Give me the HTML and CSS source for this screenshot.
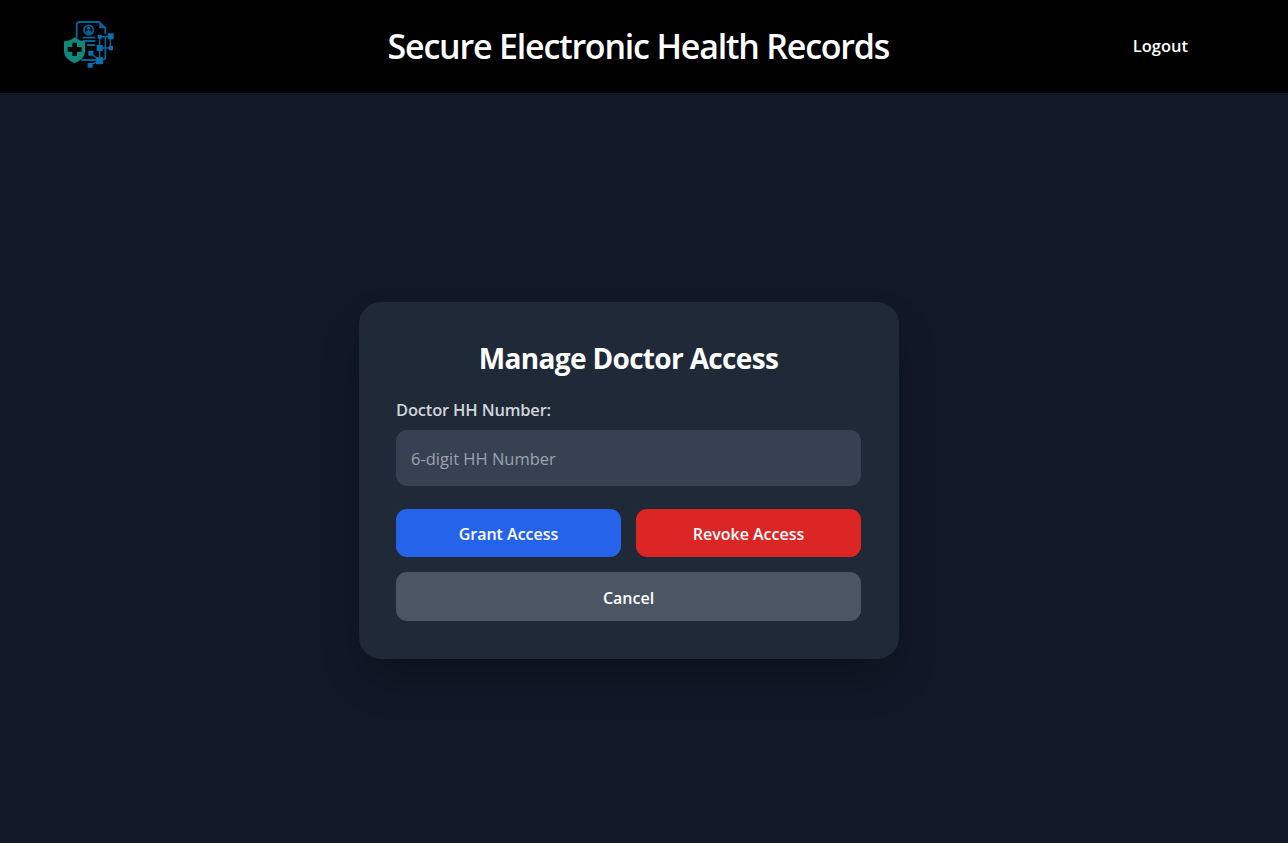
FILE: index.html
```html
<!DOCTYPE html>
<html lang="en">
<head>
<meta charset="utf-8">
<title>Secure Electronic Health Records</title>
<link rel="stylesheet" href="styles.css">
</head>
<body>
<header class="header">
  <svg class="logo" viewBox="0 0 198 192" fill="none">
    <g stroke="#06629b" stroke-width="5.5" stroke-linecap="round" stroke-linejoin="round">
      <path d="M62 78V38q0-8 8-8h60l18 18v16M148 112v24q0 7-7 7M78 144h40"/>
      <circle cx="98" cy="54" r="14"/>
      <path d="M82 77h34M82 87h34M95 99h20"/>
      <path stroke-width="4.5" d="M132 74h30M131 74v32M131 108h32v-34M104 123l27 23M103 159l26-13M131 108v38M148 76v30"/>
    </g>
    <path d="M130 30l19 19h-19z" fill="#06629b"/>
    <circle cx="98" cy="49" r="5.5" fill="#06629b"/>
    <path d="M88 62q2-7 10-7t10 7q-10 6-20 0z" fill="#06629b"/>
    <g fill="#0870ae">
      <path d="M155 64h18v18h-18zM125 68h12v12h-12zM122 99h18v18h-18zM158 102h13v13h-13zM97 116h15v15H97zM120 136h21v21h-21zM95 153h15v14H95z"/>
    </g>
    <path d="M56 76q15 12 31 12v30q0 23-31 36q-32-13-32-36V88q17 0 32-12z" fill="#10897a"/>
    <path d="M49 92h14v13h14v14H63v13H49v-13H35v-14h14z" fill="#000"/>
  </svg>
  <h1 class="brand">Secure Electronic Health Records</h1>
  <a class="logout">Logout</a>
</header>
<main class="main">
  <form class="card">
    <h2 class="title">Manage Doctor Access</h2>
    <label class="label" for="hh">Doctor HH Number:</label>
    <input class="input" id="hh" type="text" placeholder="6-digit HH Number">
    <div class="actions">
      <button class="btn grant" type="button">Grant Access</button>
      <button class="btn revoke" type="button">Revoke Access</button>
      <button class="btn cancel" type="button">Cancel</button>
    </div>
  </form>
</main>
</body>
</html>
```
FILE: styles.css
```css
* { box-sizing: border-box; }
body {
  margin: 0;
  height: 843px;
  display: flex;
  flex-direction: column;
  overflow: hidden;
  background: #111827;
  color: #fff;
  font-family: "Segoe UI", "Open Sans", "Noto Sans", sans-serif;
}
.header {
  height: 93px;
  flex: none;
  display: flex;
  align-items: center;
  justify-content: space-between;
  padding: 0 100px 2px 56px;
  background: #000;
}
.logo { width: 66px; height: 64px; margin-bottom: 3px; }
.brand {
  margin: 0 0 0 22px;
  font-size: 34px;
  font-weight: 600;
  line-height: 46px;
  letter-spacing: -1.2px;
  white-space: nowrap;
}
.logout { font-size: 16.5px; font-weight: 600; line-height: 24px; }
.main {
  flex: 1;
  display: flex;
  align-items: center;
  justify-content: center;
  padding: 25px 30px 0 0;
}
.card {
  width: 540px;
  height: 357px;
  padding: 37px 38px 38px 37px;
  display: flex;
  flex-direction: column;
  border-radius: 22px;
  background: #1f2937;
  box-shadow: 0 23px 47px -11px rgba(0, 0, 0, .3);
}
.title {
  margin: 0;
  font-size: 28px;
  font-weight: 700;
  line-height: 38px;
  letter-spacing: -.67px;
  text-align: center;
}
.label {
  margin: 21px 0 8px;
  font-size: 16.5px;
  font-weight: 600;
  line-height: 24px;
  letter-spacing: -.18px;
  color: #d1d5db;
}
.input {
  height: 56px;
  padding: 0 15px;
  border: 0;
  border-radius: 11px;
  background: #374151;
  color: #fff;
  font: 400 16.5px "Segoe UI", "Open Sans", "Noto Sans", sans-serif;
}
.input::placeholder { color: #9ca3af; opacity: 1; }
.actions {
  display: grid;
  grid-template-columns: 1fr 1fr;
  grid-template-rows: 48px 49px;
  gap: 15px;
  margin-top: 23px;
}
.btn {
  padding: 2px 0 0;
  border: 0;
  border-radius: 11px;
  color: #fff;
  font: 600 16px "Segoe UI", "Open Sans", "Noto Sans", sans-serif;
}
.grant { background: #2563eb; }
.revoke { background: #dc2626; }
.cancel { grid-column: 1 / -1; background: #4b5563; }
```
